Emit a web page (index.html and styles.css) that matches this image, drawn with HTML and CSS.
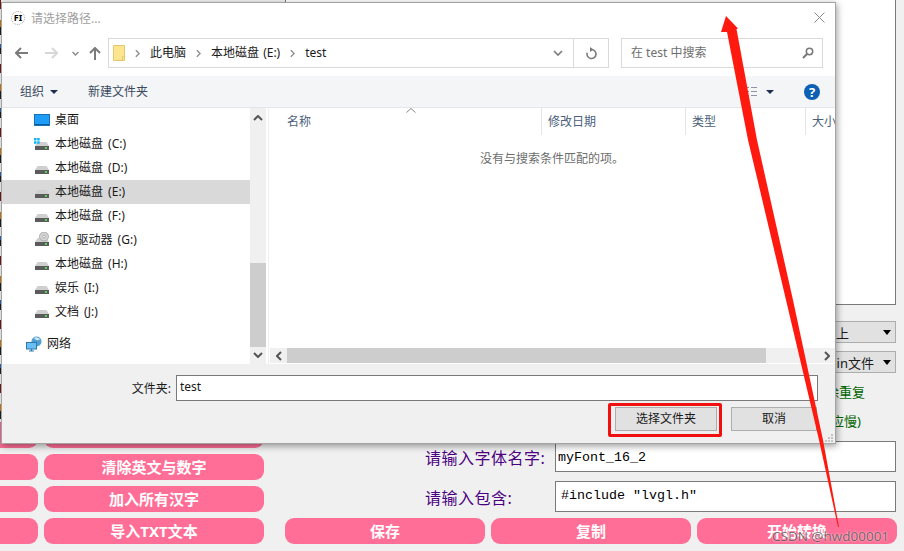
FILE: index.html
```html
<!DOCTYPE html>
<html lang="en">
<head>
    <meta charset="UTF-8">
    <meta name="viewport" content="width=device-width, initial-scale=1.0">
    <title>请选择路径...</title>
    <link rel="stylesheet" href="styles.css">
</head>
<body>
    <svg class="defs" width="0" height="0">
        <symbol id="drive" viewBox="0 0 16 16">
            <path d="M3.5 6h9l2.5 4H1z" fill="#cfcfcf"/>
            <rect x="1" y="10" width="14" height="4" fill="#5b5b5b"/>
            <rect x="11" y="11" width="2" height="2" fill="#58d058"/>
        </symbol>
        <symbol id="chev-r" viewBox="0 0 6 10">
            <path d="M1 1l4 4-4 4" fill="none" stroke="#8a8a8a" stroke-width="1.6"/>
        </symbol>
    </svg>

    <!-- app behind the dialog -->
    <div class="app">
        <div class="left">
            <div class="src-strip"></div>
            <div class="btn-grid">
                <div class="btn"></div><div class="btn"></div>
                <div class="btn"></div><div class="btn">清除英文与数字</div>
                <div class="btn"></div><div class="btn">加入所有汉字</div>
                <div class="btn"></div><div class="btn">导入TXT文本</div>
            </div>
        </div>
        <div class="right">
            <div class="output-box"></div>
            <div class="combo combo-first"><span>上</span><i class="combo-caret"></i></div>
            <div class="combo combo-second"><span>in文件</span><i class="combo-caret"></i></div>
            <div class="opt opt-first">除重复</div>
            <div class="opt opt-second">应慢)</div>
            <div class="form-row form-row-first">
                <label>请输入字体名字:</label>
                <div class="line-field field-name">myFont_16_2</div>
            </div>
            <div class="form-row form-row-second">
                <label>请输入包含:</label>
                <div class="line-field field-include">#include "lvgl.h"</div>
            </div>
            <div class="action-row">
                <div class="btn">保存</div>
                <div class="btn">复制</div>
                <div class="btn">开始转换</div>
            </div>
        </div>
    </div>

    <!-- folder picker window -->
    <div class="dialog">
        <div class="titlebar">
            <span class="app-icon">FI</span>
            <span class="title-text">请选择路径...</span>
            <svg class="close" width="11" height="11" viewBox="0 0 11 11"><path d="M.5.5l10 10M10.5.5l-10 10" stroke="#8c8c8c" fill="none"/></svg>
        </div>

        <div class="navbar">
            <div class="nav-btn nav-back"><svg width="13" height="12" viewBox="0 0 13 12"><path d="M6 1L1 6l5 5M1 6h12" fill="none" stroke="#7b7b7b" stroke-width="2"/></svg></div>
            <div class="nav-btn nav-fwd"><svg width="13" height="12" viewBox="0 0 13 12"><path d="M7 1l5 5-5 5M12 6H0" fill="none" stroke="#d8d8d8" stroke-width="2"/></svg></div>
            <div class="nav-btn nav-recent"><svg width="7" height="5" viewBox="0 0 7 5"><path d="M.5 1l3 3 3-3" fill="none" stroke="#8a8a8a" stroke-width="1.4"/></svg></div>
            <div class="nav-btn nav-up"><svg width="12" height="13" viewBox="0 0 12 13"><path d="M1 6l5-5 5 5M6 1v12" fill="none" stroke="#7b7b7b" stroke-width="2"/></svg></div>
            <div class="address">
                <svg class="folder" width="12" height="16" viewBox="0 0 12 16"><path d="M.5.5h11v15H.5z" fill="#fde58f" stroke="#e6c66e"/><path d="M9.5 15.5v-4h2" fill="none" stroke="#e6c66e"/></svg>
                <svg class="crumb-sep" width="5" height="9"><use href="#chev-r"/></svg>
                <span>此电脑</span>
                <svg class="crumb-sep" width="5" height="9"><use href="#chev-r"/></svg>
                <span>本地磁盘 (E:)</span>
                <svg class="crumb-sep" width="5" height="9"><use href="#chev-r"/></svg>
                <span>test</span>
                <div class="addr-drop"><svg width="10" height="6" viewBox="0 0 10 6"><path d="M1 1l4 4 4-4" fill="none" stroke="#7b7b7b" stroke-width="1.7"/></svg></div>
                <div class="addr-refresh"><svg width="12" height="13" viewBox="0 0 12 13"><path d="M6.5 2.5a4.5 4.5 0 1 1-4.3 3.2" fill="none" stroke="#7b7b7b" stroke-width="1.6"/><path d="M5 0l3.500 2.500L5 5z" fill="#7b7b7b"/></svg></div>
            </div>
            <div class="search">
                <span>在 test 中搜索</span>
                <svg width="12" height="12" viewBox="0 0 12 12"><circle cx="7.5" cy="4.5" r="3.2" fill="none" stroke="#777" stroke-width="1.5"/><path d="M5 7l-4 4" stroke="#777" stroke-width="2"/></svg>
            </div>
        </div>

        <div class="toolbar">
            <span>组织</span>
            <i class="tool-caret"></i>
            <span class="tool-new">新建文件夹</span>
            <svg class="view-icon" width="16" height="9" viewBox="0 0 16 9"><path d="M1 .5h6M9 .5h6M1 4.500h6M9 4.500h6M1 8.500h6M9 8.500h6" stroke="#8a94a3"/></svg>
            <i class="tool-caret view-caret"></i>
            <span class="help">?</span>
        </div>

        <div class="main">
            <div class="tree">
                <div class="tree-row">
                    <svg width="16" height="16" viewBox="0 0 16 16"><rect x=".5" y="2.500" width="15" height="11" fill="#1f9cf5" stroke="#1670b8"/><path d="M1 12.500h14" stroke="#0d5c9c"/></svg>
                    <span>桌面</span>
                </div>
                <div class="tree-row">
                    <svg width="16" height="16" viewBox="0 0 16 16"><use href="#drive"/><path d="M0 2h2.500v2.500H0zM3.200 2h2.500v2.500H3.200zM0 5.200h2.500v2.500H0zM3.200 5.200h2.500v2.500H3.200z" fill="#13b4f5"/></svg>
                    <span>本地磁盘 (C:)</span>
                </div>
                <div class="tree-row"><svg width="16" height="16"><use href="#drive"/></svg><span>本地磁盘 (D:)</span></div>
                <div class="tree-row selected"><svg width="16" height="16"><use href="#drive"/></svg><span>本地磁盘 (E:)</span></div>
                <div class="tree-row"><svg width="16" height="16"><use href="#drive"/></svg><span>本地磁盘 (F:)</span></div>
                <div class="tree-row">
                    <svg width="16" height="16" viewBox="0 0 16 16"><use href="#drive"/><circle cx="10" cy="4.500" r="4.500" fill="#d4d4d4" stroke="#9a9a9a" stroke-width=".7"/><circle cx="10" cy="4.500" r="1.300" fill="#fff" stroke="#888" stroke-width=".6"/></svg>
                    <span>CD 驱动器 (G:)</span>
                </div>
                <div class="tree-row"><svg width="16" height="16"><use href="#drive"/></svg><span>本地磁盘 (H:)</span></div>
                <div class="tree-row"><svg width="16" height="16"><use href="#drive"/></svg><span>娱乐 (I:)</span></div>
                <div class="tree-row"><svg width="16" height="16"><use href="#drive"/></svg><span>文档 (J:)</span></div>
                <div class="tree-row tree-net">
                    <svg width="16" height="16" viewBox="0 0 16 16"><circle cx="10.500" cy="5.500" r="5" fill="#4f9fd0"/><path d="M8 2c2-1.500 5-.5 6 2-2 0-4 1-6-2z" fill="#cfe6f4"/><rect x=".5" y="6.500" width="10" height="6.500" fill="#69c0f5" stroke="#2c79ac"/><path d="M3 15h5M5.500 13v2" stroke="#2c79ac" stroke-width="1.200"/></svg>
                    <span>网络</span>
                </div>
            </div>

            <div class="vscroll">
                <svg width="10" height="6" viewBox="0 0 10 6"><path d="M1 5l4-4 4 4" fill="none" stroke="#555" stroke-width="2"/></svg>
                <div class="vthumb"></div>
                <svg width="10" height="6" viewBox="0 0 10 6"><path d="M1 1l4 4 4-4" fill="none" stroke="#555" stroke-width="2"/></svg>
            </div>

            <div class="list">
                <div class="list-head">
                    <div class="col col-name">名称</div>
                    <div class="col col-date">修改日期</div>
                    <div class="col col-type">类型</div>
                    <div class="col col-size">大小</div>
                    <svg class="sort-mark" width="10" height="5" viewBox="0 0 10 5"><path d="M.5 4.500L5 .5l4.500 4" fill="none" stroke="#8a8a8a"/></svg>
                </div>
                <div class="list-body">没有与搜索条件匹配的项。</div>
                <div class="hscroll">
                    <div class="hbtn"><svg width="6" height="10" viewBox="0 0 6 10"><path d="M5 1L1 5l4 4" fill="none" stroke="#555" stroke-width="2"/></svg></div>
                    <div class="hthumb"></div>
                    <div class="hbtn hbtn-end"><svg width="6" height="10" viewBox="0 0 6 10"><path d="M1 1l4 4-4 4" fill="none" stroke="#555" stroke-width="2"/></svg></div>
                </div>
            </div>
        </div>

        <div class="footer">
            <div class="path-row">
                <span>文件夹:</span>
                <div class="path-field">test</div>
            </div>
            <div class="footer-btns">
                <div class="win-btn win-btn-main">选择文件夹<span class="red-box"></span></div>
                <div class="win-btn win-btn-cancel">取消</div>
            </div>
            <svg class="grip" width="9" height="9" viewBox="0 0 9 9"><path d="M6 0h2v2H6zM3 3h2v2H3zM6 3h2v2H6zM0 6h2v2H0zM3 6h2v2H3zM6 6h2v2H6z" fill="#c4c4c4"/></svg>
        </div>
    </div>

    <!-- hand drawn annotation on top of the screenshot -->
    <svg class="red-arrow" width="904" height="551" viewBox="0 0 904 551">
        <path d="M726 16L738 28.500 736.500 29 757 140 793 300 823 440 839 527 838 527 819 440 786 300 748 140 727 32 721 32z" fill="#ff1a10"/>
    </svg>
    <div class="watermark">CSDN @hwd00001</div>
</body>
</html>
```

FILE: styles.css
```css
* {
    box-sizing: border-box;
}

body {
    margin: 0;
    width: 904px;
    height: 551px;
    overflow: hidden;
    position: relative;
    background: #f0f0f0;
    font-family: "Noto Sans", "Noto Sans CJK SC", sans-serif;
    font-size: 12px;
    color: #1a1a1a;
}

.defs {
    position: absolute;
}

/* Background app */
.app {
    display: flex;
    gap: 21px;
    height: 551px;
}

.left {
    width: 264px;
    flex-shrink: 0;
    display: flex;
    flex-direction: column;
}

.src-strip {
    width: 1px;
    height: 422px;
    flex-shrink: 0;
    background: repeating-linear-gradient(180deg, #7a1a1a 0 9px, #fff 9px 20px, #d9820f 20px 27px, #222 27px 35px, #fff 35px 44px, #2a6fc0 44px 48px, #222 48px 54px, #fff 54px 64px);
}

.btn-grid {
    display: grid;
    grid-template-columns: 220px 220px;
    grid-auto-rows: 26px;
    gap: 6px;
    margin-left: -182px;
}

.btn {
    background: #ff6e96;
    border-radius: 9px;
    color: #fff;
    font-size: 15px;
    font-weight: bold;
    padding-bottom: 1px;
    display: flex;
    justify-content: center;
    align-items: center;
}

.right {
    flex: 1;
    display: flex;
    flex-direction: column;
    padding-right: 7px;
}

.output-box {
    height: 307px;
    margin-top: -2px;
    margin-right: 1px;
    background: #fff;
    border: 1px solid #7a7a7a;
    flex-shrink: 0;
}

.combo {
    align-self: flex-end;
    width: 126px;
    height: 22px;
    margin-right: 1px;
    display: flex;
    align-items: center;
    justify-content: flex-end;
    background: #e1e1e1;
    border: 1px solid #adadad;
    font-size: 13px;
}

.combo-first {
    margin-top: 16px;
}

.combo-first span {
    margin-right: 34px;
}

.combo-second {
    margin-top: 8px;
}

.combo-second span {
    margin-right: 9px;
}

.combo-caret {
    width: 0;
    height: 0;
    margin-right: 4px;
    border-left: 4px solid transparent;
    border-right: 4px solid transparent;
    border-top: 5px solid #000;
}

.opt {
    align-self: flex-end;
    height: 16px;
    line-height: 16px;
    color: #006400;
    font-size: 13px;
}

.opt-first {
    margin-top: 11px;
    margin-right: 32px;
}

.opt-second {
    margin-top: 13px;
    margin-right: 36px;
}

.form-row {
    display: flex;
    align-items: center;
    justify-content: flex-end;
    margin-right: 1px;
}

.form-row-first {
    margin-top: 12px;
}

.form-row-second {
    margin-top: 9px;
}

.form-row label {
    width: 130px;
    color: #4b0082;
    font-size: 16px;
    letter-spacing: 0.5px;
}

.line-field {
    width: 341px;
    height: 31px;
    background: #fff;
    border: 1px solid #7a7a7a;
    font-family: "Liberation Mono", monospace;
    font-size: 13.33px;
    line-height: 26px;
    color: #000;
}

.field-name {
    padding: 3px 2px 0;
}

.field-include {
    padding: 1px 5px 0;
}

.action-row {
    display: grid;
    grid-template-columns: 200px 200px 200px;
    gap: 6px;
    margin-top: 6px;
}

.action-row .btn {
    height: 26px;
}

/* Folder picker dialog */
.dialog {
    position: absolute;
    left: 1px;
    top: 2px;
    width: 835px;
    height: 442px;
    display: flex;
    flex-direction: column;
    overflow: hidden;
    background: #fff;
    border: 1px solid #a3a3a3;
    box-shadow: 1px 2px 7px rgba(0, 0, 0, 0.4);
}

.titlebar {
    height: 31px;
    flex-shrink: 0;
    display: flex;
    align-items: center;
    padding: 0 10px 2px 9px;
}

.app-icon {
    width: 14px;
    height: 14px;
    border: 1px dotted #b0a0a0;
    border-radius: 50%;
    font-size: 9px;
    font-weight: bold;
    line-height: 12px;
    text-align: center;
    color: #000;
}

.title-text {
    margin-left: 6px;
    color: #a0a0a0;
}

.close {
    margin-left: auto;
}

.navbar {
    height: 42px;
    flex-shrink: 0;
    display: flex;
    align-items: flex-start;
    padding: 4px 0 0 6px;
}

.nav-btn {
    height: 30px;
    display: flex;
    align-items: center;
    justify-content: center;
}

.nav-back {
    width: 27px;
}

.nav-fwd {
    width: 32px;
}

.nav-recent {
    width: 16px;
}

.nav-up {
    width: 24px;
    margin-right: 1px;
}

.address {
    width: 501px;
    height: 30px;
    display: flex;
    align-items: center;
    gap: 10px;
    padding-left: 4px;
    border: 1px solid #d9d9d9;
    color: #1a1a1a;
    word-spacing: 1px;
}

.address span,
.search span,
.toolbar > span:not(.help),
.tree-row span {
    margin-bottom: 2px;
}

.addr-drop {
    margin-left: auto;
    width: 32px;
    height: 100%;
    display: flex;
    align-items: center;
    justify-content: center;
    border-right: 1px solid #d9d9d9;
}

.addr-refresh {
    width: 34px;
    height: 100%;
    margin-left: -10px;
    display: flex;
    align-items: center;
    justify-content: center;
}

.search {
    width: 202px;
    height: 30px;
    margin-left: 12px;
    display: flex;
    align-items: center;
    justify-content: space-between;
    padding: 0 8px 0 9px;
    border: 1px solid #d9d9d9;
    color: #6d6d6d;
}

.toolbar {
    height: 32px;
    flex-shrink: 0;
    display: flex;
    align-items: center;
    padding: 0 15px 0 18px;
    background: #f4f5f7;
    border-bottom: 1px solid #e6e6e6;
    color: #3a4a5e;
}

.tool-caret {
    width: 0;
    height: 0;
    margin-left: 6px;
    border-left: 4px solid transparent;
    border-right: 4px solid transparent;
    border-top: 4px solid #1f2f4f;
}

.tool-new {
    margin-left: 30px;
}

.view-icon {
    margin-left: auto;
}

.view-caret {
    margin-left: 8px;
}

.help {
    width: 16px;
    height: 16px;
    margin-left: 30px;
    border-radius: 50%;
    background: #0d60b4;
    color: #fff;
    font-size: 13px;
    font-weight: bold;
    line-height: 16px;
    text-align: center;
}

.main {
    height: 256px;
    flex-shrink: 0;
    display: flex;
}

.tree {
    width: 248px;
    flex-shrink: 0;
}

.tree-row {
    height: 24px;
    display: flex;
    align-items: center;
    gap: 5px;
    padding-left: 32px;
    word-spacing: 2px;
}

.tree-row svg {
    flex-shrink: 0;
}

.tree-row.selected {
    background: #d9d9d9;
}

.tree-net {
    margin-top: 8px;
    padding-left: 24px;
}

.vscroll {
    width: 16px;
    flex-shrink: 0;
    display: flex;
    flex-direction: column;
    align-items: center;
    background: #f0f0f0;
    padding-top: 7px;
}

.vthumb {
    width: 100%;
    height: 84px;
    margin-top: 142px;
    margin-bottom: 5px;
    background: #cdcdcd;
}

.list {
    flex: 1;
    display: flex;
    flex-direction: column;
    min-width: 0;
    margin-left: 2px;
    border-left: 1px solid #efefef;
}

.list-head {
    height: 27px;
    flex-shrink: 0;
    display: flex;
    position: relative;
    color: #4c607a;
}

.col {
    flex-shrink: 0;
    padding: 1px 0 0 6px;
    line-height: 26px;
    border-right: 1px solid #e5e5e5;
    white-space: nowrap;
}

.col-name {
    width: 273px;
    padding-left: 18px;
}

.col-date {
    width: 144px;
}

.col-type {
    width: 120px;
}

.col-size {
    width: 60px;
    border-right: 0;
}

.sort-mark {
    position: absolute;
    left: 137px;
    top: 0;
}

.list-body {
    flex: 1;
    padding: 14px 0 0 211px;
    color: #6d6d6d;
}

.hscroll {
    height: 15px;
    flex-shrink: 0;
    margin: 0 0 1px 1px;
    display: flex;
    background: #f0f0f0;
}

.hbtn {
    width: 17px;
    display: flex;
    align-items: center;
    justify-content: center;
}

.hthumb {
    width: 479px;
    background: #cdcdcd;
}

.hbtn-end {
    margin-left: auto;
}

.footer {
    flex: 1;
    position: relative;
    background: #f0f0f0;
}

.path-row {
    display: flex;
    justify-content: flex-end;
    align-items: center;
    gap: 5px;
    padding: 11px 17px 0 0;
}

.path-field {
    width: 642px;
    height: 26px;
    padding-left: 3px;
    line-height: 22px;
    background: #fff;
    border: 1px solid #7a7a7a;
}

.footer-btns {
    display: flex;
    justify-content: flex-end;
    gap: 14px;
    margin-top: 6px;
    padding-right: 18px;
}

.win-btn {
    height: 24px;
    position: relative;
    line-height: 22px;
    text-align: center;
    background: #e1e1e1;
    border: 1px solid #adadad;
}

.win-btn-main {
    width: 102px;
}

.win-btn-cancel {
    width: 86px;
}

/* highlight drawn over the button */
.red-box {
    position: absolute;
    left: -8px;
    right: -6px;
    top: -5px;
    bottom: -7px;
    border: 3px solid #f01010;
    border-radius: 2px;
}

.grip {
    position: absolute;
    right: 1px;
    bottom: 0;
}

.red-arrow {
    position: absolute;
    left: 0;
    top: 0;
}

.watermark {
    position: absolute;
    left: 772px;
    top: 527px;
    font-family: "Open Sans", sans-serif;
    font-size: 13.5px;
    line-height: 18px;
    color: rgba(70, 70, 70, 0.75);
    text-shadow: 0 0 2px rgba(255, 255, 255, 0.9);
    white-space: nowrap;
}
```
